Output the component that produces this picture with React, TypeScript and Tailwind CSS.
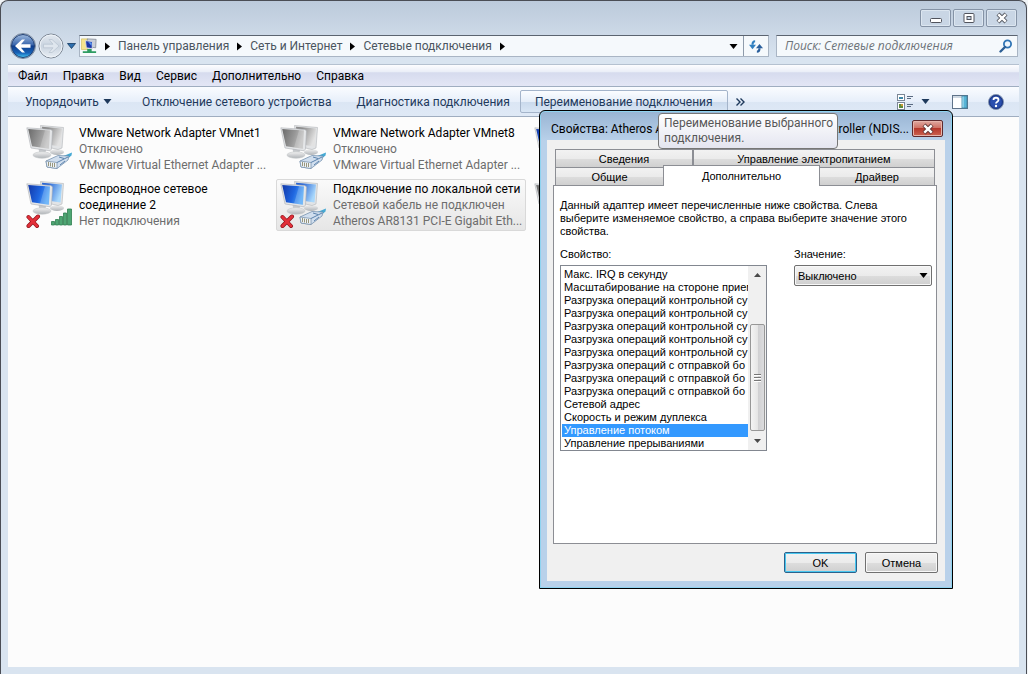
import React, { useState } from 'react';

type Adapter = {
  name?: string;
  status?: string;
  device?: string;
  enabled: boolean;
  wireless?: boolean;
  error?: boolean;
  selected?: boolean;
};

const adapters: Adapter[] = [
  { name: 'VMware Network Adapter VMnet1', status: 'Отключено', device: 'VMware Virtual Ethernet Adapter ...', enabled: false },
  { name: 'VMware Network Adapter VMnet8', status: 'Отключено', device: 'VMware Virtual Ethernet Adapter ...', enabled: false },
  { enabled: true },
  { name: 'Беспроводное сетевое соединение 2', status: 'Нет подключения', enabled: true, wireless: true, error: true },
  { name: 'Подключение по локальной сети', status: 'Сетевой кабель не подключен', device: 'Atheros AR8131 PCI-E Gigabit Eth...', enabled: true, error: true, selected: true },
  { enabled: false },
];

const menuItems = ['Файл', 'Правка', 'Вид', 'Сервис', 'Дополнительно', 'Справка'];
const crumbs = ['Панель управления', 'Сеть и Интернет', 'Сетевые подключения'];

const properties = [
  'Макс. IRQ в секунду',
  'Масштабирование на стороне прием',
  'Разгрузка операций контрольной су',
  'Разгрузка операций контрольной су',
  'Разгрузка операций контрольной су',
  'Разгрузка операций контрольной су',
  'Разгрузка операций контрольной су',
  'Разгрузка операций с отправкой бо',
  'Разгрузка операций с отправкой бо',
  'Разгрузка операций с отправкой бо',
  'Сетевой адрес',
  'Скорость и режим дуплекса',
  'Управление потоком',
  'Управление прерываниями',
];

const AdapterIcon = ({ enabled, wireless, error, id }: { enabled: boolean; wireless?: boolean; error?: boolean; id: string }) => (
  <svg width="48" height="48" viewBox="0 0 48 48" className="flex-none" aria-hidden="true">
    <defs>
      <linearGradient id={`${id}-screen`} x1="0" y1="0" x2="1" y2="0.3">
        <stop offset="0" stopColor={enabled ? '#1238a8' : '#6a6a6a'} />
        <stop offset="0.6" stopColor={enabled ? '#1f66e0' : '#989898'} />
        <stop offset="1" stopColor={enabled ? '#4fa6f7' : '#c0c0c0'} />
      </linearGradient>
      <linearGradient id={`${id}-back`} x1="0" y1="0" x2="1" y2="0.4">
        <stop offset="0.3" stopColor={enabled ? '#2a66d4' : '#8b8b8b'} />
        <stop offset="1" stopColor={enabled ? '#a9d8fc' : '#e2e2e2'} />
      </linearGradient>
      <linearGradient id={`${id}-base`} x1="0" y1="0" x2="0" y2="1">
        <stop offset="0" stopColor="#f2f2f2" />
        <stop offset="1" stopColor="#b0b4b8" />
      </linearGradient>
    </defs>
    <ellipse cx="31" cy="28" rx="7" ry="3" fill={`url(#${id}-base)`} />
    <path d="M14.500 1.500 L37.500 3.500 L36 24 L32 25.500 L17 22 Z" fill="#e2e4e6" stroke="#b2b5b8" strokeWidth="0.6" />
    <path d="M16 2.800 L36 4.500 L34.500 22.500 L18 20 Z" fill={`url(#${id}-back)`} />
    <path d="M12.500 24 L20 26 L19 31 L13.500 31 Z" fill="#c6c9cc" />
    <ellipse cx="16" cy="31" rx="9" ry="3.200" fill={`url(#${id}-base)`} stroke="#c5c8ca" strokeWidth="0.6" />
    <path d="M0.800 3.800 L25 5.500 L26.500 7 L25.500 25 L24 26.800 L5 24 Z" fill="#e4e6e8" stroke="#abafb3" strokeWidth="0.6" />
    <path d="M2.200 5 L24 6.600 L22.800 24.800 L6 22.300 Z" fill={`url(#${id}-screen)`} />
    <path d="M19 6.200 L24 6.600 L22.800 24.800 L14 23.500 Z" fill="#fff" opacity="0.2" />
    {wireless ? (
      <g fill="#4ea673" stroke="#2f7f50" strokeWidth="0.8">
        <path d="M25.500 41.500 h3 v3.500 h-3 Z" />
        <path d="M29.500 39.500 h3 v5.500 h-3 Z" />
        <path d="M33.500 36.500 h3 v8.500 h-3 Z" />
        <path d="M37.500 33 h3 v12 h-3 Z" />
        <path d="M41.500 29 h4 v16 h-4 Z" />
      </g>
    ) : (
      <g>
        <path d="M35 33 L46 28.500 L45.500 31.500 L40 36 Z" fill="#45a9d4" />
        <path d="M20 37 L32 31.500 L43 32 L42 36 L31 44.500 L21 43 Z" fill="#d0deee" stroke="#6886a6" strokeWidth="0.7" />
        <path d="M20 37 L31 38.500 L31 44.500 L21 43 Z" fill="#eef3f8" stroke="#7089a4" strokeWidth="0.7" />
        <path d="M31 38.500 L42 33 M33 33 L38 34.500 M34 41 L39 37" stroke="#5c83ad" strokeWidth="1" />
        <path d="M22.500 38 v4 M24.500 38.500 v4 M26.500 39 v4 M28.500 39 v4" stroke="#98967c" strokeWidth="1" />
      </g>
    )}
    {error && (
      <g>
        <path d="M2.500 37 L11 46 M12 36.500 L2.500 46" stroke="#8d1118" strokeWidth="4" strokeLinecap="round" />
        <path d="M2.500 37 L11 46 M12 36.500 L2.500 46" stroke="#e3303a" strokeWidth="2.600" strokeLinecap="round" />
      </g>
    )}
  </svg>
);

const RightArrow = () => (
  <svg width="5" height="9" viewBox="0 0 5 9" aria-hidden="true">
    <path d="M0 0.500 L5 4.500 L0 8.500 Z" fill="#000" />
  </svg>
);

const DownArrow = ({ color = '#000' }: { color?: string }) => (
  <svg width="9" height="5" viewBox="0 0 9 5" aria-hidden="true" className="flex-none">
    <path d="M0.500 0 H8.500 L4.500 5 Z" fill={color} />
  </svg>
);

const CrossGlyph = ({ size, stroke }: { size: number; stroke: string }) => (
  <svg width={size} height={size} viewBox="0 0 12 10" aria-hidden="true">
    <path d="M2 1 L10 9 M10 1 L2 9" stroke={stroke} strokeWidth="4.200" />
    <path d="M2.300 1.300 L9.700 8.700 M9.700 1.300 L2.300 8.700" stroke="#fff" strokeWidth="2.400" />
  </svg>
);

const NavButtons = () => (
  <div className="flex h-7 items-center">
    <button aria-label="Назад" className="flex-none">
      <svg width="26" height="26" viewBox="0 0 26 26">
        <defs>
          <linearGradient id="nav-back" x1="0" y1="0" x2="0" y2="1">
            <stop offset="0" stopColor="#9cb8dd" />
            <stop offset="0.45" stopColor="#3a67ad" />
            <stop offset="0.5" stopColor="#0f3d8c" />
            <stop offset="0.8" stopColor="#1763b8" />
            <stop offset="1" stopColor="#46c8f4" />
          </linearGradient>
        </defs>
        <circle cx="13" cy="13" r="12.500" fill="#e8eff7" stroke="#76879c" />
        <circle cx="13" cy="13" r="11.500" fill="url(#nav-back)" stroke="#213f73" />
        <path d="M5 13 L12 6.500 H15 L11 11.200 H20.500 V14.800 H11 L15 19.500 H12 Z" fill="#fff" />
      </svg>
    </button>
    <button aria-label="Вперед" className="ml-0.5 flex-none">
      <svg width="26" height="26" viewBox="0 0 26 26">
        <defs>
          <linearGradient id="nav-fwd" x1="0" y1="0" x2="0" y2="1">
            <stop offset="0" stopColor="#e3e9f0" />
            <stop offset="0.5" stopColor="#c9d3df" />
            <stop offset="1" stopColor="#e9eff5" />
          </linearGradient>
        </defs>
        <circle cx="13" cy="13" r="12" fill="url(#nav-fwd)" stroke="#7d8794" />
        <circle cx="13" cy="13" r="11" fill="none" stroke="#eef3f8" />
        <path d="M21 13 L14 6.500 H11 L15 11.200 H5.500 V14.800 H15 L11 19.500 H14 Z" fill="#dfe6ee" stroke="#b6c1cf" strokeWidth="0.7" />
      </svg>
    </button>
    <button aria-label="Последние страницы" className="ml-[3px]">
      <svg width="9" height="6" viewBox="0 0 9 6">
        <path d="M0.500 0.500 H8.500 L4.500 5.500 Z" fill="#2e6fae" stroke="#14395f" strokeWidth="0.8" />
      </svg>
    </button>
  </div>
);

const AddressBar = () => (
  <div className="flex h-[22px] min-w-0 flex-1 items-stretch border border-[#a9b5c4] border-t-[#5b6470] bg-[#f5f9fc]">
    <div className="flex min-w-0 flex-1 items-center pl-px">
      <svg width="16" height="18" viewBox="0 0 18 18" aria-hidden="true" className="flex-none">
        <path d="M0.500 1 h7 v12 h-7 Z" fill="#f5e48e" stroke="#cdb959" strokeWidth="0.7" />
        <path d="M7 1 L17 1.500 L16.500 11 L8 10 Z" fill="#c9cfd8" stroke="#7a828d" strokeWidth="0.8" />
        <path d="M5 3 L13 4 L12.500 12 L6 11 Z" fill="#1c36a8" stroke="#d6dbe2" />
        <path d="M8 4.500 L12 5 L12 9 Z" fill="#5f9cf0" />
        <path d="M7 12.500 h5 v2.500 h5 v2 H2 v-2 h5 Z" fill="#2e9c62" />
      </svg>
      {crumbs.map((crumb) => (
        <React.Fragment key={crumb}>
          <span className="mr-2 ml-2 w-[5px] flex-none">
            <RightArrow />
          </span>
          <a href="#" className="flex-none text-[#4a5560]">{crumb}</a>
        </React.Fragment>
      ))}
      <span className="ml-2 flex-none">
        <RightArrow />
      </span>
      <button aria-label="Предыдущие расположения" className="ml-auto px-[5px]">
        <DownArrow />
      </button>
    </div>
    <button aria-label="Обновить" className="flex w-[25px] flex-none items-center justify-center border-l border-[#8e9bab]">
      <svg width="14" height="13" viewBox="0 0 16 14">
        <path d="M7 1 C4.500 1 4 3 4 5" fill="none" stroke="#2f7fc0" strokeWidth="2.400" />
        <path d="M0 5 H8 L4 10 Z" fill="#2f7fc0" />
        <path d="M9 13 C11.500 13 12 11 12 9" fill="none" stroke="#2a5f9c" strokeWidth="2.400" />
        <path d="M8 9 H16 L12 4 Z" fill="#2a5f9c" />
      </svg>
    </button>
  </div>
);

const ExplorerWindow = () => (
  <div className="flex h-screen flex-col rounded-t-lg border border-b-0 border-[#4a4d55] bg-[#d9e4f0] bg-[linear-gradient(#bccadb,#d9e4f0_58px)] px-[7px] pb-[7px]">
    <div className="flex h-[34px] flex-none justify-end gap-0.5 px-0.5 pt-2">
      <button aria-label="Свернуть" className="flex h-[18px] w-[31px] items-center justify-center rounded-xs border border-[#8593a6] bg-[#c9d6e5] shadow-[inset_0_0_0_1px_#dce6f0]">
        <svg width="12" height="10" viewBox="0 0 12 10"><rect x="0.500" y="5.500" width="11" height="4" rx="1" fill="#fff" stroke="#50535c" /></svg>
      </button>
      <button aria-label="Развернуть" className="flex h-[18px] w-[31px] items-center justify-center rounded-xs border border-[#8593a6] bg-[#c9d6e5] shadow-[inset_0_0_0_1px_#dce6f0]">
        <svg width="12" height="10" viewBox="0 0 12 10">
          <rect x="1" y="0.500" width="10" height="9" rx="1" fill="#fff" stroke="#50535c" />
          <rect x="4" y="3.500" width="4" height="3" fill="#c9d6e5" stroke="#50535c" />
        </svg>
      </button>
      <button aria-label="Закрыть" className="flex h-[18px] w-[31px] items-center justify-center rounded-xs border border-[#8593a6] bg-[#c9d6e5] shadow-[inset_0_0_0_1px_#dce6f0]">
        <CrossGlyph size={12} stroke="#50535c" />
      </button>
    </div>

    <div className="flex h-[29px] flex-none items-start gap-[3px] px-0.5 pr-px">
      <div className="-mt-[3px]"><NavButtons /></div>
      <div className="flex min-w-0 flex-1 gap-[7px]">
        <AddressBar />
        <label className="flex h-[22px] w-[242px] flex-none items-center border border-[#a9b5c4] border-t-[#5b6470] bg-[#f5f9fc] pr-1 pl-2">
          <input
            type="text"
            aria-label="Поиск"
            placeholder="Поиск: Сетевые подключения"
            className="min-w-0 flex-1 bg-transparent font-['Open_Sans','Noto_Sans',sans-serif] italic outline-none placeholder:text-[#6d7379]"
          />
          <svg width="14" height="14" viewBox="0 0 14 14" aria-hidden="true">
            <circle cx="8.500" cy="5" r="3.600" fill="#eef6fd" stroke="#2f74b5" strokeWidth="1.800" />
            <path d="M6 8 L1.500 12.500" stroke="#2d5f95" strokeWidth="2.400" strokeLinecap="round" />
          </svg>
        </label>
      </div>
    </div>

    <nav className="flex h-[22px] flex-none items-center gap-[15px] border-t border-[#b5c1d0] bg-[linear-gradient(#fdfdff,#e9edf7_35%,#d6dbee_36%,#e3e6f5)] px-2.5 text-black">
      {menuItems.map((item) => (
        <button key={item}>{item}</button>
      ))}
    </nav>

    <div className="flex h-[31px] flex-none items-center border-t border-b border-[#9fadc0] bg-[linear-gradient(#fafcff,#e7effa_50%,#dbe6f4_51%,#dfe9f6)] text-[#1e395b]">
      <button className="flex items-center gap-1 pl-[17px]">
        Упорядочить <DownArrow color="#1e395b" />
      </button>
      <button className="ml-[30px]">Отключение сетевого устройства</button>
      <button className="ml-[25px]">Диагностика подключения</button>
      <button className="ml-2.5 h-[23px] rounded-xs border border-[#a4b4ca] bg-[linear-gradient(#fbfdff,#e6eef9_50%,#c9d9ec_51%,#d9e6f5)] px-3.5">
        Переименование подключения
      </button>
      <button aria-label="Дополнительные команды" className="ml-2">
        <svg width="9" height="8" viewBox="0 0 9 8">
          <path d="M0.500 0.500 L4 4 L0.500 7.500 M4.500 0.500 L8 4 L4.500 7.500" fill="none" stroke="#1e395b" strokeWidth="1.400" />
        </svg>
      </button>
      <div className="ml-auto flex items-center pr-[15px]">
        <button aria-label="Изменить представление" className="flex items-center gap-2">
          <svg width="16" height="16" viewBox="0 0 16 16">
            <rect x="0.500" y="0.500" width="7" height="6" fill="#fff" stroke="#7b8796" />
            <rect x="0.500" y="8.500" width="7" height="7" fill="#fff" stroke="#7b8796" />
            <path d="M2 3 h4 v2 h-4 Z" fill="#3f88a8" />
            <path d="M2 10 h2 v2 h2 v2 h-4 Z" fill="#5e8a3c" />
            <path d="M4 10 h2 v2 h-2 Z" fill="#c99a35" />
            <path d="M10 2.500 h6 M10 4.500 h4 M10 10.500 h6 M10 12.500 h4" stroke="#5b6b82" />
          </svg>
          <DownArrow color="#1e395b" />
        </button>
        <button aria-label="Область просмотра" className="ml-[22px]">
          <svg width="16" height="14" viewBox="0 0 16 14">
            <rect x="0.500" y="0.500" width="15" height="13" fill="#fff" stroke="#5f7389" />
            <path d="M1 2 h14" stroke="#9fb2c6" />
            <rect x="10" y="1" width="5" height="12" fill="#58b4d6" stroke="#3d7f9f" strokeWidth="0.8" />
            <path d="M11 1.500 v11" stroke="#b7e3f2" />
          </svg>
        </button>
        <button aria-label="Справка" className="ml-5">
          <svg width="16" height="16" viewBox="0 0 16 16">
            <circle cx="8" cy="8" r="7.500" fill="#2a4fae" stroke="#8292ad" />
            <circle cx="8" cy="8" r="6.400" fill="none" stroke="#1b347c" />
            <path d="M5.500 6 C5.500 3 10.500 3 10.500 6 C10.500 7.800 8 7.600 8 9.600" fill="none" stroke="#fff" strokeWidth="1.800" />
            <circle cx="8" cy="12" r="1.200" fill="#fff" />
          </svg>
        </button>
      </div>
    </div>

    <main className="min-h-0 flex-1 bg-[#fcfcfc] px-3.5 pt-1.5">
      <ul className="grid grid-cols-[repeat(auto-fill,250px)] gap-1">
        {adapters.map((adapter, i) => (
          <li
            key={i}
            className={
              adapter.selected
                ? 'flex h-[52px] rounded-xs border border-[#d9d9d9] bg-[linear-gradient(#fafafa,#e6e6e6)] pl-[3px]'
                : 'flex h-[52px] rounded-xs border border-transparent pl-[3px]'
            }
          >
            <AdapterIcon id={`adapter-${i}`} enabled={adapter.enabled} wireless={adapter.wireless} error={adapter.error} />
            {adapter.name && (
              <div className="ml-[5px] min-w-0 flex-1 pt-px leading-4 text-[#6d6d6d]">
                <p className={adapter.wireless ? 'w-[150px] text-black' : 'whitespace-nowrap text-black'}>{adapter.name}</p>
                <p className="whitespace-nowrap">{adapter.status}</p>
                {adapter.device && <p className="whitespace-nowrap">{adapter.device}</p>}
              </div>
            )}
          </li>
        ))}
      </ul>
    </main>
  </div>
);

const PropertyList = () => {
  const [selected, setSelected] = useState(12);
  return (
    <div className="flex h-[186px] w-[207px] border border-[#828790] bg-white">
      <ul role="listbox" aria-labelledby="property-label" className="min-w-0 flex-1 pt-0.5 pl-px">
        {properties.map((property, i) => (
          <li
            key={i}
            role="option"
            aria-selected={i === selected}
            onClick={() => setSelected(i)}
            className={
              i === selected
                ? 'bg-[#3399ff] pl-0.5 leading-[13px] whitespace-nowrap text-white'
                : 'pl-0.5 leading-[13px] whitespace-nowrap'
            }
          >
            {property}
          </li>
        ))}
      </ul>
      <div className="flex w-[18px] flex-none flex-col items-center bg-[#f0f0f0]">
        <button aria-label="Вверх" className="flex h-[17px] w-full items-center justify-center">
          <svg width="7" height="4" viewBox="0 0 7 4"><path d="M0 4 H7 L3.500 0 Z" fill="#4a4a4a" /></svg>
        </button>
        <div className="mt-auto flex h-[107px] w-[15px] flex-col items-center justify-center gap-px rounded-xs border border-[#979797] bg-[linear-gradient(90deg,#f4f4f4,#e6e6e6_50%,#cfcfd1_51%,#dcdcde)]">
          <span className="h-0.5 w-[7px] border-b border-white bg-[#777]" />
          <span className="h-0.5 w-[7px] border-b border-white bg-[#777]" />
          <span className="h-0.5 w-[7px] border-b border-white bg-[#777]" />
        </div>
        <button aria-label="Вниз" className="flex h-[19px] w-full items-center justify-center">
          <svg width="7" height="4" viewBox="0 0 7 4"><path d="M0 0 H7 L3.500 4 Z" fill="#4a4a4a" /></svg>
        </button>
      </div>
    </div>
  );
};

const PropertiesDialog = () => (
  <section
    role="dialog"
    aria-labelledby="dialog-title"
    className="absolute top-[110px] left-[539px] flex w-[414px] flex-col rounded-t-md border border-black bg-[#b7d1ea] bg-[linear-gradient(#98b4d3,#b9d1ea_30px)] px-[7px] pb-[7px] shadow-[inset_0_0_0_1px_#8fd3f0]"
  >
    <header className="flex h-[29px] items-center pt-1.5 pl-1">
      <h1 id="dialog-title" className="flex min-w-0 flex-1 justify-between font-[Roboto,'Open_Sans',sans-serif] text-xs whitespace-nowrap">
        <span>Свойства: Atheros A</span>
        <span className="pr-[3px]">troller (NDIS...</span>
      </h1>
      <button
        aria-label="Закрыть"
        className="mr-0.5 flex h-[17px] w-[31px] items-center justify-center rounded-xs border border-[#5e2a2e] bg-[linear-gradient(#dfa9a1,#cf6f62_48%,#b5382c_50%,#cc6350)] shadow-[inset_0_0_0_1px_#e6b5ac]"
      >
        <CrossGlyph size={12} stroke="#5c3434" />
      </button>
    </header>

    <div className="flex flex-col bg-[#f0f0f0] pt-[9px] pr-2 pb-2 pl-1.5 text-[11px] leading-[13px] text-black">
      <div role="tablist" className="px-0.5">
        <div className="flex h-[18px]">
          <button role="tab" aria-selected="false" className="w-[138px] border border-b-0 border-[#8c8e94] bg-[linear-gradient(#f2f2f2,#ebebeb_50%,#dddddd_51%,#d0d0d0)] pt-px">
            Сведения
          </button>
          <button role="tab" aria-selected="false" className="flex-1 border border-b-0 border-[#8c8e94] bg-[linear-gradient(#f2f2f2,#ebebeb_50%,#dddddd_51%,#d0d0d0)] pt-px">
            Управление электропитанием
          </button>
        </div>
        <div className="flex h-[18px] items-end">
          <button role="tab" aria-selected="false" className="h-[18px] w-[108px] border border-r-0 border-b-0 border-[#8c8e94] bg-[linear-gradient(#f2f2f2,#ebebeb_50%,#dddddd_51%,#d0d0d0)] pt-px">
            Общие
          </button>
          <button role="tab" aria-selected="true" className="relative -mb-px h-[21px] w-[157px] border border-b-0 border-[#8c8e94] bg-white">
            Дополнительно
          </button>
          <button role="tab" aria-selected="false" className="h-[18px] flex-1 border border-b-0 border-l-0 border-[#8c8e94] bg-[linear-gradient(#f2f2f2,#ebebeb_50%,#dddddd_51%,#d0d0d0)] pt-px">
            Драйвер
          </button>
        </div>
      </div>

      <div role="tabpanel" className="h-[359px] border border-[#8c8e94] bg-white pt-[13px] pl-1.5">
        <p className="w-[360px]">
          Данный адаптер имеет перечисленные ниже свойства. Слева
          выберите изменяемое свойство, а справа выберите значение этого
          свойства.
        </p>
        <div className="mt-2.5 flex gap-[27px]">
          <div className="flex-none">
            <p id="property-label" className="mb-1">Свойство:</p>
            <PropertyList />
          </div>
          <div className="w-[138px] flex-none">
            <label htmlFor="value" className="mb-1 block">Значение:</label>
            <div className="relative">
              <select
                id="value"
                className="h-[21px] w-full appearance-none rounded-xs border border-[#707070] bg-[linear-gradient(#f2f2f2,#ebebeb_50%,#dddddd_51%,#cfcfcf)] pt-px pl-[3px] shadow-[inset_0_0_0_1px_#f8f8f8]"
              >
                <option>Выключено</option>
                <option>Включено</option>
              </select>
              <span className="pointer-events-none absolute top-2 right-1">
                <DownArrow />
              </span>
            </div>
          </div>
        </div>
      </div>

      <div className="mt-2 -mr-px flex justify-end gap-2">
        <button className="h-[21px] w-[73px] rounded-xs border border-[#2c628b] bg-[linear-gradient(#f2f2f2,#ebebeb_50%,#dddddd_51%,#cfcfcf)] pt-px shadow-[inset_0_0_0_1px_#48c7f0]">
          OK
        </button>
        <button className="h-[21px] w-[73px] rounded-xs border border-[#707070] bg-[linear-gradient(#f2f2f2,#ebebeb_50%,#dddddd_51%,#cfcfcf)] pt-px shadow-[inset_0_0_0_1px_#f8f8f8]">
          Отмена
        </button>
      </div>
    </div>
  </section>
);

const App = () => {
  return (
    <div className="relative min-h-screen overflow-hidden bg-[#f1f4f7] pr-px font-[Roboto,'Open_Sans',sans-serif] text-xs">
      <ExplorerWindow />
      <div className="font-['Liberation_Sans',Arial,sans-serif]">
        <PropertiesDialog />
      </div>
      <div
        role="tooltip"
        className="absolute top-[113px] left-[658px] w-[180px] rounded-sm border border-[#767676] bg-[linear-gradient(#ffffff,#e4e5f0)] py-0.5 pl-[5px] leading-[15px] whitespace-nowrap text-[#575757]"
      >
        Переименование выбранного
        <br />
        подключения.
      </div>
    </div>
  );
};

export default App;
